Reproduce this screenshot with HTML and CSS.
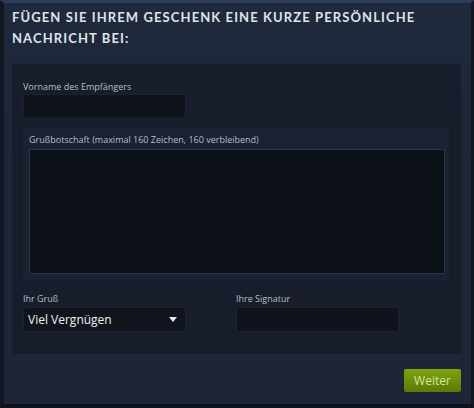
FILE: index.html
```html
<!DOCTYPE html>
<html lang="de">
<head>
<meta charset="utf-8">
<link rel="stylesheet" href="styles.css">
</head>
<body>
<div class="frame">
  <h1 class="title">Fügen Sie Ihrem Geschenk eine kurze persönliche<br>Nachricht bei:</h1>
  <div class="panel">
    <label class="label">Vorname des Empfängers</label>
    <div class="input"></div>
    <div class="msgbox">
      <label class="label">Grußbotschaft (maximal 160 Zeichen, 160 verbleibend)</label>
      <div class="textarea"></div>
    </div>
    <div class="row">
      <div class="col">
        <label class="label">Ihr Gruß</label>
        <div class="select">
          <span class="select-text">Viel Vergnügen</span>
          <svg class="caret" width="8" height="5" viewBox="0 0 8 5"><path d="M0 0 H8 L4 5 Z" fill="#e6e9ee"/></svg>
        </div>
      </div>
      <div class="col">
        <label class="label">Ihre Signatur</label>
        <div class="input sig"></div>
      </div>
    </div>
  </div>
  <div class="actions">
    <button class="btn">Weiter</button>
  </div>
</div>
</body>
</html>
```
FILE: styles.css
```css
html, body {
  margin: 0;
  padding: 0;
  background: #10141c;
}
.frame {
  width: 474px;
  height: 408px;
  box-sizing: border-box;
  border-top: 3px solid #2a3d5a;
  border-left: 4px solid #121722;
  border-right: 3px solid #121722;
  border-bottom: 4px solid #0e1219;
  background: linear-gradient(180deg, #1f2a3c 0%, #1d2536 40%, #1e2537 100%);
  padding: 4px 0 0 8px;
  font-family: "Open Sans", "Noto Sans", sans-serif;
}
.title {
  margin: 0;
  font-family: Lato, "Open Sans", sans-serif;
  font-size: 13px;
  line-height: 21px;
  font-weight: 700;
  letter-spacing: 1.1px;
  text-transform: uppercase;
  white-space: nowrap;
  color: #dfe4ea;
}
.panel {
  margin-top: 15px;
  width: 449px;
  height: 290px;
  box-sizing: border-box;
  background: #171d2a;
  padding: 16px 11px 0 11px;
  display: flex;
  flex-direction: column;
}
.label {
  display: block;
  font-size: 9px;
  line-height: 13px;
  color: #b8bfca;
  margin-bottom: 1px;
}
.input {
  width: 163px;
  height: 25px;
  box-sizing: border-box;
  background: #0f131b;
  border: 1px solid #1c2230;
  border-radius: 2px;
}
.msgbox {
  margin-top: 9px;
  width: 426px;
  height: 152px;
  box-sizing: border-box;
  background: #1a2130;
  padding: 5px 4px 6px 6px;
  display: flex;
  flex-direction: column;
}
.msgbox .label {
  margin-bottom: 3px;
}
.textarea {
  flex: 1;
  background: #0c1017;
  border: 1px solid #2b3344;
}
.row {
  display: flex;
  gap: 50px;
  margin-top: 12px;
}
.col {
  width: 163px;
  display: flex;
  flex-direction: column;
}
.col .label {
  margin-bottom: 2px;
}
.select {
  height: 25px;
  box-sizing: border-box;
  background: #10141c;
  border: 1px solid #1d2331;
  border-radius: 2px;
  display: flex;
  align-items: center;
  justify-content: space-between;
  padding: 0 8px 0 4px;
}
.select-text {
  font-size: 12px;
  color: #eef1f5;
  font-weight: 500;
}
.sig {
  width: 163px;
}
.actions {
  display: flex;
  justify-content: flex-end;
  width: 449px;
  margin-top: 15px;
}
.btn {
  width: 57px;
  height: 23px;
  border: none;
  border-radius: 2px;
  background: linear-gradient(180deg, #7fa30b 0%, #5c7a06 100%);
  color: #cfe7a3;
  font-family: "Open Sans", "Noto Sans", sans-serif;
  font-size: 12px;
  padding: 0;
  cursor: pointer;
}
```
